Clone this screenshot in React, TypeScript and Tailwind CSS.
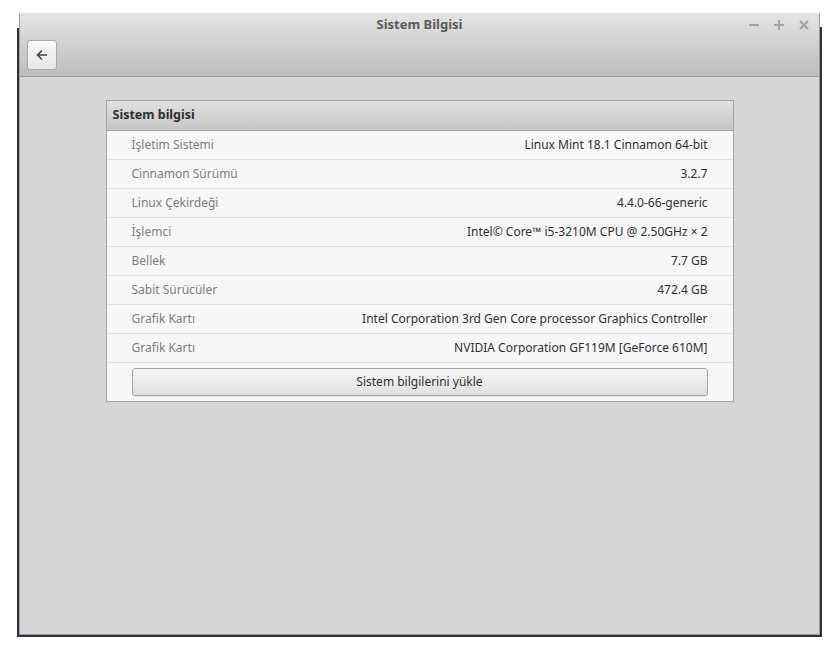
import React from 'react';

type InfoRow = { label: string; value: string };

const rows: InfoRow[] = [
  { label: 'İşletim Sistemi', value: 'Linux Mint 18.1 Cinnamon 64-bit' },
  { label: 'Cinnamon Sürümü', value: '3.2.7' },
  { label: 'Linux Çekirdeği', value: '4.4.0-66-generic' },
  { label: 'İşlemci', value: 'Intel© Core™ i5-3210M CPU @ 2.50GHz × 2' },
  { label: 'Bellek', value: '7.7 GB' },
  { label: 'Sabit Sürücüler', value: '472.4 GB' },
  { label: 'Grafik Kartı', value: 'Intel Corporation 3rd Gen Core processor Graphics Controller' },
  { label: 'Grafik Kartı', value: 'NVIDIA Corporation GF119M [GeForce 610M]' },
];

// Titlebar buttons: minimize, maximize, close
const WindowControls = () => (
  <div className="flex items-center gap-[11px] text-[#a3a3a3]">
    <svg width="14" height="14" viewBox="0 0 14 14">
      <rect x="2" y="6" width="10" height="2" fill="currentColor" />
    </svg>
    <svg width="14" height="14" viewBox="0 0 14 14">
      <rect x="2" y="6" width="10" height="2" fill="currentColor" />
      <rect x="6" y="2" width="2" height="10" fill="currentColor" />
    </svg>
    <svg width="14" height="14" viewBox="0 0 14 14">
      <path d="M3 3 L11 11 M11 3 L3 11" stroke="currentColor" strokeWidth="2.2" />
    </svg>
  </div>
);

const BackButton = () => (
  <button className="w-[30px] h-[30px] flex items-center justify-center rounded-[3px] border border-[#a9a9a9] bg-gradient-to-b from-[#f9f9f9] to-[#e6e6e6] text-[#444]">
    <svg width="14" height="14" viewBox="0 0 14 14" fill="none">
      <path d="M12 7 H2.5 M7 2.5 L2.5 7 L7 11.5" stroke="currentColor" strokeWidth="1.6" />
    </svg>
  </button>
);

export default function App() {
  return (
    <div
      className="w-[840px] h-[650px] bg-white flex flex-col"
      style={{ fontFamily: '"Noto Sans", "Open Sans", sans-serif' }}
    >
      <div className="flex pl-[17px] pt-[13px]">
        {/* desktop edge on the left */}
        <div className="flex flex-col w-[2px]">
          <div className="h-[15px]" />
          <div className="flex-1 bg-[#2d323a]" />
        </div>

        <div className="w-[801px] h-[622px] flex flex-col border-l border-r border-b border-[#9d9d9d] bg-[#d6d6d6]">
          {/* Titlebar + toolbar */}
          <div className="h-[64px] flex flex-col bg-gradient-to-b from-[#e4e4e4] to-[#bcbcbc] border-b border-[#9a9a9a]">
            <div className="relative h-[22px] flex items-center justify-center pt-[2px]">
              <span className="text-[13px] font-bold text-[#5a5a5a]">Sistem Bilgisi</span>
              <div className="absolute right-[8px] top-[5px]">
                <WindowControls />
              </div>
            </div>
            <div className="pl-[7px] pt-[5px]">
              <BackButton />
            </div>
          </div>

          {/* Content */}
          <div className="flex-1 flex justify-center pt-[23px]">
            <div className="w-[628px] h-fit border border-[#a3a3a3] bg-[#f7f7f7]">
              <div className="h-[30px] flex items-center pl-[6px] bg-gradient-to-b from-[#e0e0e0] to-[#c6c6c6] border-b border-[#a0a0a0]">
                <span className="text-[12.5px] font-bold text-[#2f2f2f]">Sistem bilgisi</span>
              </div>
              {rows.map((row, i) => (
                <div
                  key={i}
                  className="h-[29px] flex items-center justify-between px-[25px] border-b border-[#e2e2e2] text-[12px]"
                >
                  <span className="text-[#7d7d7d]">{row.label}</span>
                  <span className="text-[#303030]">{row.value}</span>
                </div>
              ))}
              <div className="px-[25px] pt-[5px] pb-[5px]">
                <button className="w-full h-[28px] rounded-[3px] border border-[#a8a8a8] bg-gradient-to-b from-[#f6f6f6] to-[#e0e0e0] text-[12px] text-[#303030] shadow-[0_1px_0_rgba(0,0,0,0.08)]">
                  Sistem bilgilerini yükle
                </button>
              </div>
            </div>
          </div>
        </div>

        {/* desktop edge on the right */}
        <div className="flex flex-col w-[2px]">
          <div className="h-[14px]" />
          <div className="flex-1 bg-[#2d323a]" />
        </div>
      </div>
      <div className="ml-[17px] w-[805px] h-[2px] bg-[#2d323a]" />
    </div>
  );
}
